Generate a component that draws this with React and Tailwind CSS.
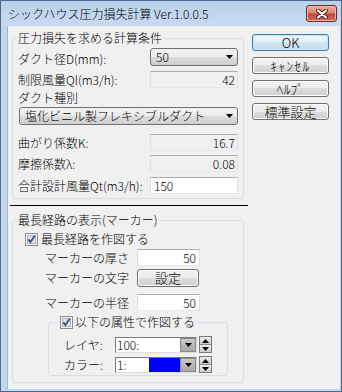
import React from "react";

function Arrow() {
  return (
    <svg width="7" height="4" viewBox="0 0 7 4" className="shrink-0">
      <polygon points="0,0 7,0 3.5,4" fill="#000" />
    </svg>
  );
}

function Combo({ children, className = "" }) {
  return (
    <div
      className={
        "h-[18px] flex items-center justify-between border border-[#707070] rounded-[3px] bg-[linear-gradient(#f2f2f2_0%,#ebebeb_50%,#dddddd_50%,#cfcfcf_100%)] pl-[5px] pr-[4px] " +
        className
      }
    >
      <span className="leading-[14px]">{children}</span>
      <Arrow />
    </div>
  );
}

function ReadOnly({ children }) {
  return (
    <div className="w-[88px] h-[17px] flex items-center justify-end pr-[2px] bg-[#f0f0f0] border-t border-t-[#abadb3] border-x border-x-[#dbdfe6] border-b border-b-[#e3e9ef]">
      {children}
    </div>
  );
}

function Input({ children, className = "", right = false }) {
  return (
    <div
      className={
        "h-[17px] flex items-center bg-white border-t border-t-[#abadb3] border-x border-x-[#dbdfe6] border-b border-b-[#e3e9ef] " +
        (right ? "justify-end pr-[3px] " : "pl-[3px] ") +
        className
      }
    >
      {children}
    </div>
  );
}

function WinButton({ children, className = "", primary = false }) {
  return (
    <div
      className={
        "flex items-center justify-center rounded-[3px] border " +
        (primary
          ? "border-[#3c7fb1] bg-[linear-gradient(#eef6fc_0%,#e3eff8_50%,#d3e5f3_50%,#c6dcee_100%)] shadow-[inset_0_0_0_1px_#c4e5f9] "
          : "border-[#707070] bg-[linear-gradient(#f2f2f2_0%,#ebebeb_50%,#dddddd_50%,#cfcfcf_100%)] shadow-[inset_0_0_0_1px_#fcfcfc] ") +
        className
      }
    >
      {children}
    </div>
  );
}

function Check() {
  return (
    <svg width="13" height="13" viewBox="0 0 13 13" className="shrink-0">
      <rect x="0.5" y="0.5" width="12" height="12" fill="#f4f4f4" stroke="#8f8f8f" />
      <rect x="2.5" y="2.5" width="8" height="8" fill="#dde1e7" stroke="#b4b9c0" />
      <path d="M3.2 6.4 L5.4 9 L9.8 2.8" fill="none" stroke="#3b4f8a" strokeWidth="1.9" />
    </svg>
  );
}

function ClassicCombo({ children, swatch = false }) {
  return (
    <div className="w-[82px] h-[16px] flex items-stretch bg-white border border-t-[#7a7a7a] border-l-[#7a7a7a] border-r-[#dcdcdc] border-b-[#dcdcdc]">
      <span className="pl-[1px] flex items-center leading-[14px] flex-1">{children}</span>
      {swatch && <span className="w-[31px] bg-[#0000ff]" />}
      <span className="w-[16px] flex items-center justify-center bg-[linear-gradient(#c9c9c9,#a9a9a9)] border border-[#8a8a8a]">
        <Arrow />
      </span>
    </div>
  );
}

function Spin() {
  return (
    <div className="ml-[2px] w-[13px] h-[17px] flex flex-col border border-[#7a7a7a] bg-[#d9d9d9]">
      <div className="flex-1 flex items-center justify-center border-b border-[#8a8a8a] bg-[linear-gradient(#ececec,#cfcfcf)]">
        <svg width="7" height="4" viewBox="0 0 7 4">
          <polygon points="0,4 7,4 3.5,0" fill="#000" />
        </svg>
      </div>
      <div className="flex-1 flex items-center justify-center bg-[linear-gradient(#ececec,#cfcfcf)]">
        <Arrow />
      </div>
    </div>
  );
}

export default function App() {
  return (
    <div className="w-[342px] h-[392px] border border-[#4a6a92] bg-[#c3d6ee] flex flex-col font-['Noto_Sans_CJK_JP','Noto_Sans',sans-serif] font-light text-[12px] leading-[14px] text-black overflow-hidden">
      {/* Title bar */}
      <div className="h-[25px] shrink-0 flex justify-between bg-[linear-gradient(#bad0eb,#c8daf0)]">
        <div className="pl-[7px] pt-[5px] leading-[16px] text-[12px] text-black">
          シックハウス圧力損失計算 Ver.1.0.0.5
        </div>
        <div className="mt-[4px] mr-[4px] w-[31px] h-[17px] rounded-[3px] border border-[#6e2b27] bg-[linear-gradient(#eab0a3_0%,#dc8474_45%,#c4463a_55%,#d26c5c_100%)] flex items-center justify-center shadow-[inset_0_0_0_1px_#f0b8ad]">
          <svg width="12" height="10" viewBox="0 0 12 10">
            <path d="M2 1.5 L10 8.5 M10 1.5 L2 8.5" stroke="#4a1a16" strokeWidth="4" strokeLinecap="round" />
            <path d="M2 1.5 L10 8.5 M10 1.5 L2 8.5" stroke="#fff" strokeWidth="2.2" strokeLinecap="round" />
          </svg>
        </div>
      </div>

      {/* Client area */}
      <div className="ml-[6px] w-[333px] h-[363px] shrink-0 border-l border-[#9fb6d4] bg-[#f0f0f0] flex">
        {/* Left column */}
        <div className="ml-[2px] w-[240px] pt-[5px] flex flex-col">
          <fieldset className="ml-[2px] w-[232px] border border-[#d5dfe5] rounded-[3px]">
            <legend className="ml-[3px] px-[2px] leading-[14px]">圧力損失を求める計算条件</legend>
            <div className="pl-[5px] pr-[5px] pt-[3px] pb-[4px] flex flex-col">
              <div className="h-[18px] flex items-center">
                <span className="flex-1 translate-y-[2px]">ダクト径D(mm):</span>
                <Combo className="w-[88px]">50</Combo>
              </div>
              <div className="mt-[5px] h-[17px] flex items-center">
                <span className="flex-1">制限風量Ql(m3/h):</span>
                <ReadOnly>42</ReadOnly>
              </div>
              <div className="mt-[3px] h-[14px]">ダクト種別</div>
              <div className="mt-[2px] flex">
                <Combo className="ml-[1px] flex-1">塩化ビニル製フレキシブルダクト</Combo>
              </div>
              <div className="mt-[9px] h-[17px] flex items-center">
                <span className="flex-1">曲がり係数K:</span>
                <ReadOnly>16.7</ReadOnly>
              </div>
              <div className="mt-[4px] h-[17px] flex items-center">
                <span className="flex-1">摩擦係数λ:</span>
                <ReadOnly>0.08</ReadOnly>
              </div>
              <div className="mt-[5px] h-[17px] flex items-center">
                <span className="flex-1 whitespace-nowrap">合計設計風量Qt(m3/h):</span>
                <Input className="w-[88px]">150</Input>
              </div>
            </div>
          </fieldset>

          <div className="mt-[6px] w-[238px] h-[1px] bg-black" />

          <fieldset className="mt-[7px] ml-[2px] w-[232px] border border-[#d5dfe5] rounded-[3px]">
            <legend className="ml-[3px] px-[2px] leading-[14px]">最長経路の表示(マーカー)</legend>
            <div className="pt-[5px] pb-[6px] flex flex-col">
              <div className="h-[14px] flex items-center pl-[12px]">
                <Check />
                <span className="ml-[3px]">最長経路を作図する</span>
              </div>
              <div className="mt-[3px] h-[17px] flex items-center pl-[32px]">
                <span className="w-[92px]">マーカーの厚さ</span>
                <Input right className="w-[63px]">50</Input>
              </div>
              <div className="mt-[3px] h-[18px] flex items-center pl-[32px]">
                <span className="w-[92px]">マーカーの文字</span>
                <WinButton className="w-[62px] h-[18px] text-[13px]">設定</WinButton>
              </div>
              <div className="mt-[7px] h-[17px] flex items-center pl-[32px]">
                <span className="w-[92px]">マーカーの半径</span>
                <Input right className="w-[63px]">50</Input>
              </div>
              <fieldset className="mt-[4px] ml-[35px] w-[180px] border border-[#d5dfe5] rounded-[3px]">
                <legend className="ml-[9px] px-[2px] leading-[14px]">
                  <span className="inline-flex items-center h-[14px]">
                    <Check />
                    <span className="ml-[2px]">以下の属性で作図する</span>
                  </span>
                </legend>
                <div className="pl-[15px] pt-[6px] pb-[2px] flex flex-col">
                  <div className="h-[16px] flex items-center">
                    <span className="w-[51px]">レイヤ:</span>
                    <ClassicCombo>100:</ClassicCombo>
                    <Spin />
                  </div>
                  <div className="mt-[4px] h-[16px] flex items-center">
                    <span className="w-[51px]">カラー:</span>
                    <ClassicCombo swatch>1:</ClassicCombo>
                    <Spin />
                  </div>
                </div>
              </fieldset>
            </div>
          </fieldset>
        </div>

        {/* Right column: buttons */}
        <div className="ml-[2px] w-[77px] pt-[8px] flex flex-col gap-[6px] text-[13px]">
          <WinButton primary className="h-[17px]">OK</WinButton>
          <WinButton className="h-[17px] tracking-[1.5px]">ｷｬﾝｾﾙ</WinButton>
          <WinButton className="h-[17px] tracking-[0.5px]">ﾍﾙﾌﾟ</WinButton>
          <WinButton className="h-[17px]">標準設定</WinButton>
        </div>
      </div>
    </div>
  );
}
